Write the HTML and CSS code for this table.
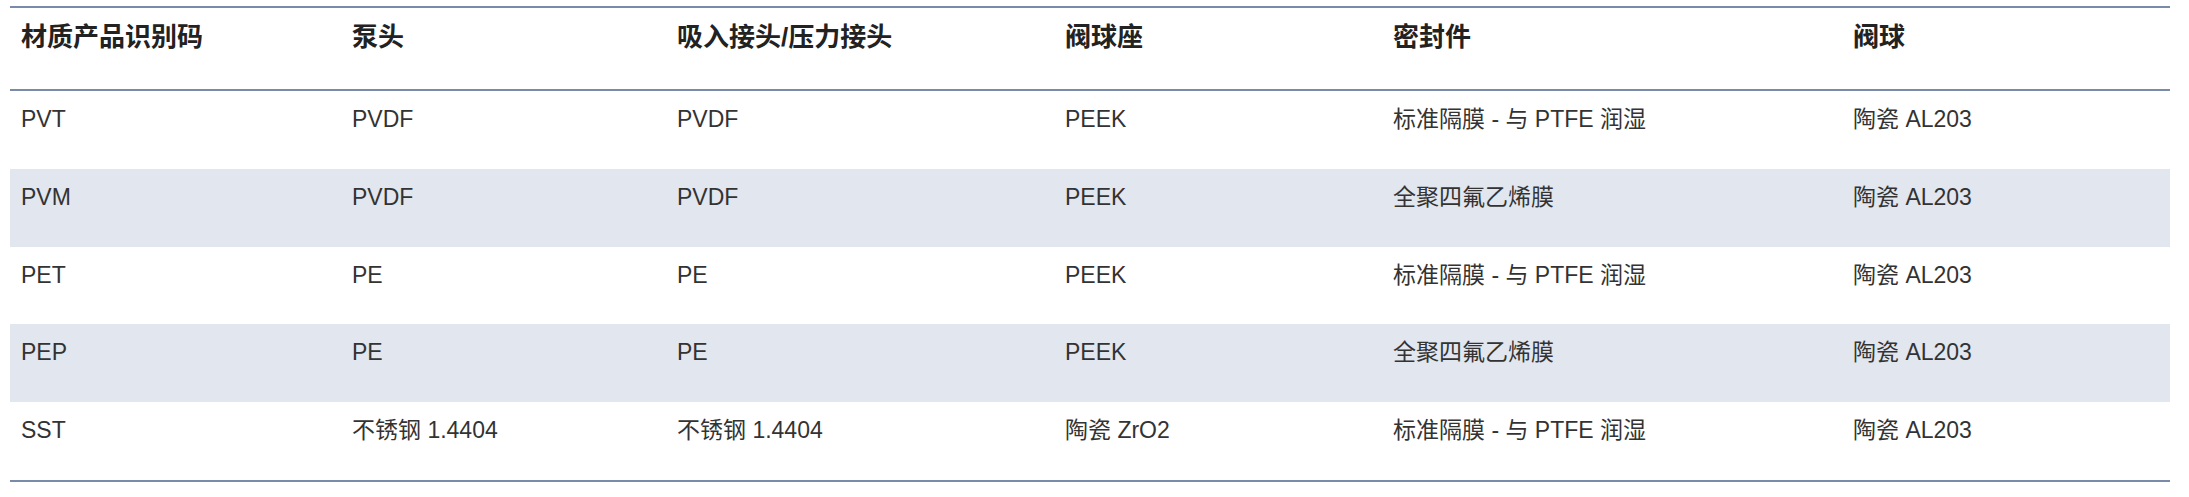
FILE: index.html
```html
<!DOCTYPE html>
<html lang="zh">
<head>
<meta charset="utf-8">
<title>材质</title>
<link rel="stylesheet" href="styles.css">
</head>
<body>
<table class="spec">
  <thead>
    <tr>
      <th class="c1">材质产品识别码</th>
      <th class="c2">泵头</th>
      <th class="c3">吸入接头/压力接头</th>
      <th class="c4">阀球座</th>
      <th class="c5">密封件</th>
      <th class="c6">阀球</th>
    </tr>
  </thead>
  <tbody>
    <tr>
      <td>PVT</td><td>PVDF</td><td>PVDF</td><td>PEEK</td><td>标准隔膜 - 与 PTFE 润湿</td><td>陶瓷 AL203</td>
    </tr>
    <tr class="alt">
      <td>PVM</td><td>PVDF</td><td>PVDF</td><td>PEEK</td><td>全聚四氟乙烯膜</td><td>陶瓷 AL203</td>
    </tr>
    <tr>
      <td>PET</td><td>PE</td><td>PE</td><td>PEEK</td><td>标准隔膜 - 与 PTFE 润湿</td><td>陶瓷 AL203</td>
    </tr>
    <tr class="alt">
      <td>PEP</td><td>PE</td><td>PE</td><td>PEEK</td><td>全聚四氟乙烯膜</td><td>陶瓷 AL203</td>
    </tr>
    <tr class="last">
      <td>SST</td><td>不锈钢 1.4404</td><td>不锈钢 1.4404</td><td>陶瓷 ZrO2</td><td>标准隔膜 - 与 PTFE 润湿</td><td>陶瓷 AL203</td>
    </tr>
  </tbody>
</table>
</body>
</html>
```

FILE: styles.css
```css
html, body {
  background: #ffffff;
}
body {
  margin: 6px 19px 0 10px;
  font-family: "Liberation Sans", "Noto Sans CJK SC", sans-serif;
  color: #333333;
}
.spec {
  width: 2160px;
  table-layout: fixed;
  border-collapse: separate;
  border-spacing: 0;
}
.spec th,
.spec td {
  box-sizing: border-box;
  text-align: left;
  vertical-align: top;
  padding: 11px 11px 0 11px;
}
.spec th {
  font-size: 26px;
  font-weight: bold;
  line-height: 36px;
  padding-bottom: 34px;
  color: #222222;
  border-top: 2px solid #7a8ba9;
  border-bottom: 2px solid #7a8ba9;
}
.spec td {
  font-size: 23px;
  font-weight: normal;
  line-height: 34px;
  padding-bottom: 32.8px;
}
.spec .alt td {
  background: #e2e6ef;
}
.spec .last td {
  border-bottom: 2px solid #7a8ba9;
}
.c1 { width: 331px; }
.c2 { width: 325px; }
.c3 { width: 388px; }
.c4 { width: 328px; }
.c5 { width: 460px; }
.c6 { width: 328px; }
```
